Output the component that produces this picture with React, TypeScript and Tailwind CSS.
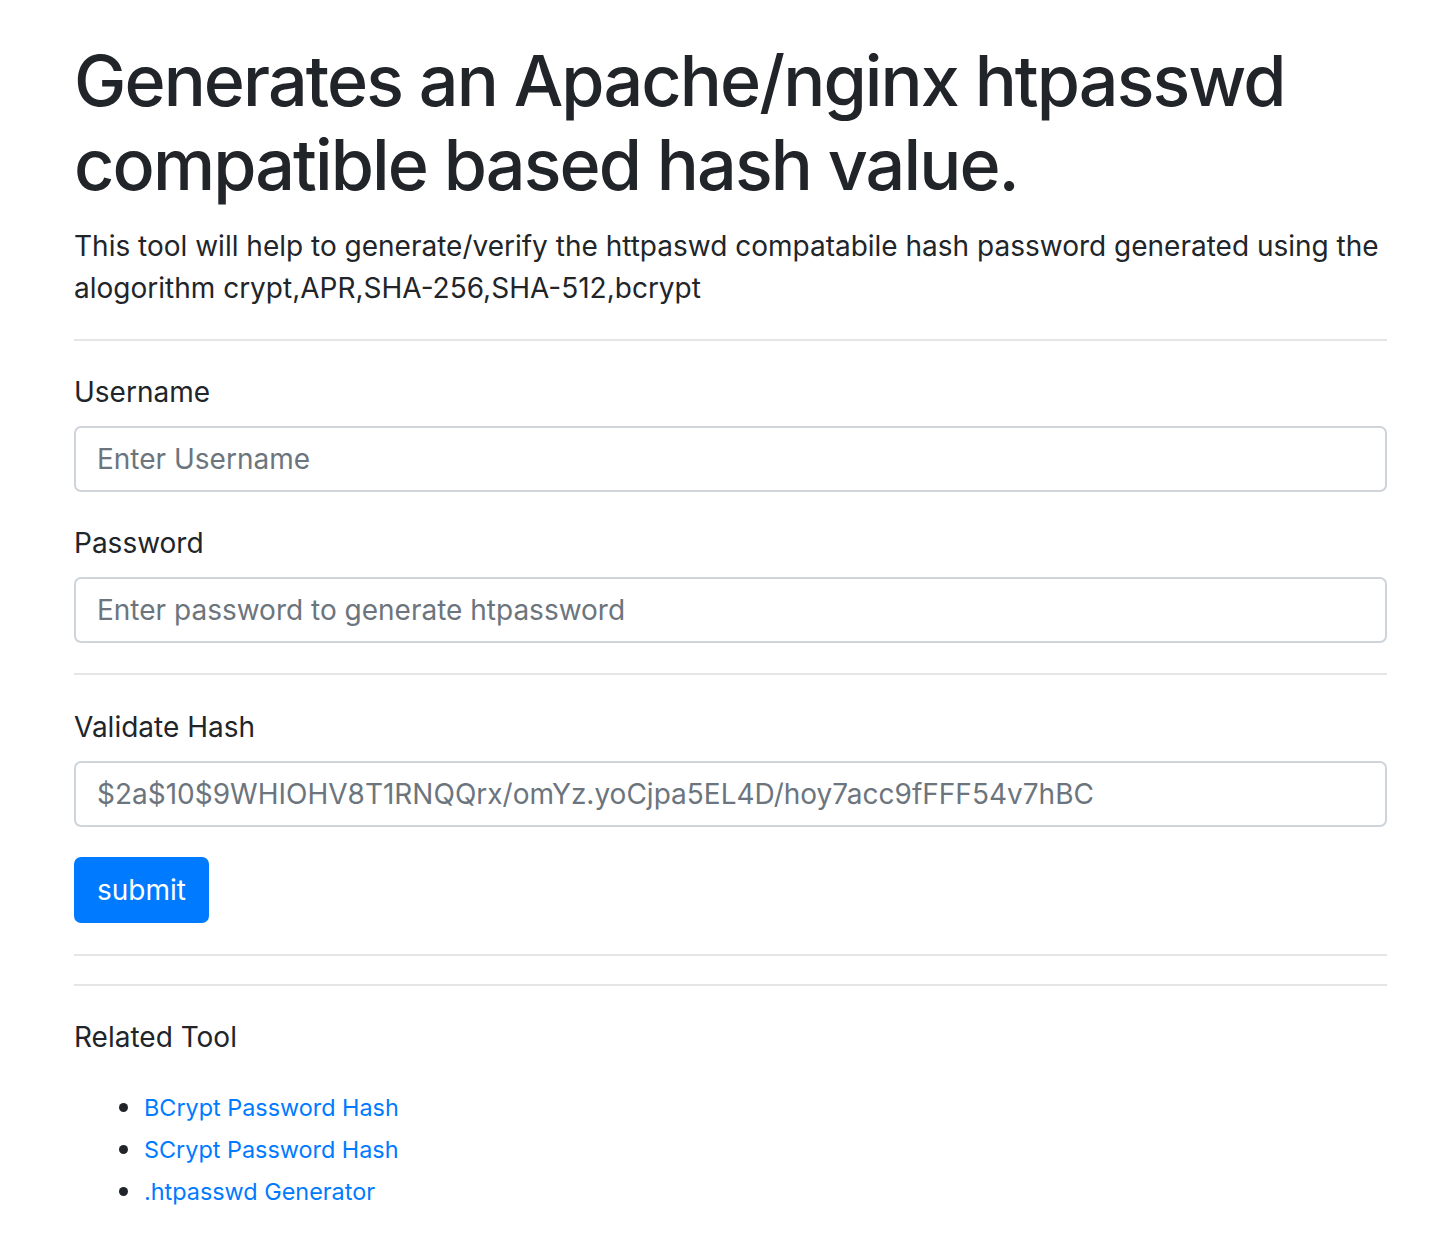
import React from 'react';

const links = ['BCrypt Password Hash', 'SCrypt Password Hash', '.htpasswd Generator'];

const inputClass =
  'block w-full h-[66px] px-[21px] rounded-[7px] border-2 border-[#ced4da] bg-white text-[28px] text-[#495057] placeholder:text-[#6c757d] outline-none';

const labelClass = 'block text-[28px] leading-[42px] mb-[13px]';

const App: React.FC = () => {
  return (
    <div className="min-h-screen bg-white text-[#212529] font-['Inter','Liberation_Sans',sans-serif]">
      <div className="mx-[74px] w-[1313px] pt-[39px] pb-[40px]">
        <h1 className="text-[70px] leading-[84px] font-medium tracking-[-1.9px] mb-[18px]">
          Generates an Apache/nginx htpasswd compatible based hash value.
        </h1>
        <p className="text-[28px] leading-[42px] mb-[30px]">
          This tool will help to generate/verify the httpaswd compatabile hash password generated using the alogorithm
          crypt,APR,SHA-256,SHA-512,bcrypt
        </p>
        <hr className="border-0 border-t-2 border-black/10 mb-[30px]" />

        <div className="mb-[30px]">
          <label className={labelClass}>Username</label>
          <input className={inputClass} placeholder="Enter Username" />
        </div>
        <div>
          <label className={labelClass}>Password</label>
          <input className={inputClass} type="text" placeholder="Enter password to generate htpassword" />
        </div>

        <hr className="border-0 border-t-2 border-black/10 mt-[30px] mb-[31px]" />

        <div>
          <label className={labelClass}>Validate Hash</label>
          <input className={inputClass} placeholder="$2a$10$9WHIOHV8T1RNQQrx/omYz.yoCjpa5EL4D/hoy7acc9fFFF54v7hBC" />
        </div>
        <button className="mt-[30px] h-[66px] px-[23px] rounded-[7px] bg-[#007bff] text-white text-[28px] leading-[42px]">
          submit
        </button>

        <hr className="border-0 border-t-2 border-black/10 mt-[31px]" />
        <hr className="border-0 border-t-2 border-black/10 mt-[28px] mb-[30px]" />

        <p className="text-[28px] leading-[42px] mb-[27px]">Related Tool</p>
        <ul className="list-disc pl-[70px] text-[29px] leading-[42px]">
          {links.map((l) => (
            <li key={l} className="marker:text-[#212529]">
              <a href="#" className="text-[#007bff] text-[23.4px] leading-none">
                {l}
              </a>
            </li>
          ))}
        </ul>
      </div>
    </div>
  );
};

export default App;
